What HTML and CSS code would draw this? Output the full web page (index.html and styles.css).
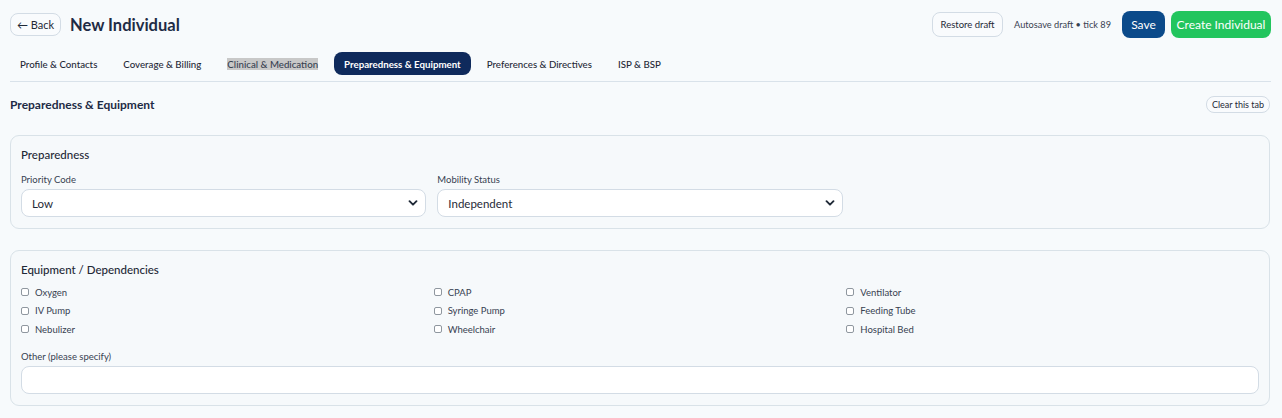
FILE: index.html
```html
<!DOCTYPE html>
<html lang="en">
<head>
<meta charset="utf-8">
<title>New Individual</title>
<link rel="stylesheet" href="styles.css">
</head>
<body>
<div class="page">
  <header class="topbar">
    <div class="left">
      <button class="btn btn-ghost back">← Back</button>
      <h1 class="title">New Individual</h1>
    </div>
    <div class="right">
      <button class="btn btn-ghost restore">Restore draft</button>
      <span class="autosave">Autosave draft • tick 89</span>
      <button class="btn btn-save">Save</button>
      <button class="btn btn-create">Create Individual</button>
    </div>
  </header>

  <nav class="tabs">
    <span class="tab">Profile &amp; Contacts</span>
    <span class="tab">Coverage &amp; Billing</span>
    <span class="tab"><span class="sel">Clinical &amp; Medication</span></span>
    <span class="tab active">Preparedness &amp; Equipment</span>
    <span class="tab">Preferences &amp; Directives</span>
    <span class="tab">ISP &amp; BSP</span>
  </nav>

  <div class="section-head">
    <h2 class="section-title">Preparedness &amp; Equipment</h2>
    <button class="btn btn-ghost clear">Clear this tab</button>
  </div>

  <section class="card card-prep">
    <h3 class="card-title">Preparedness</h3>
    <div class="grid3">
      <label class="field">
        <span class="label">Priority Code</span>
        <span class="select"><span>Low</span><svg class="chev" viewBox="0 0 10 10" width="10" height="10"><path d="M1.5 3.2 L5 6.7 L8.5 3.2" fill="none" stroke="#1f2937" stroke-width="1.9" stroke-linecap="round" stroke-linejoin="round"/></svg></span>
      </label>
      <label class="field">
        <span class="label">Mobility Status</span>
        <span class="select"><span>Independent</span><svg class="chev" viewBox="0 0 10 10" width="10" height="10"><path d="M1.5 3.2 L5 6.7 L8.5 3.2" fill="none" stroke="#1f2937" stroke-width="1.9" stroke-linecap="round" stroke-linejoin="round"/></svg></span>
      </label>
    </div>
  </section>

  <section class="card card-equip">
    <h3 class="card-title">Equipment / Dependencies</h3>
    <div class="checks">
      <label class="check"><span class="box"></span>Oxygen</label>
      <label class="check"><span class="box"></span>CPAP</label>
      <label class="check"><span class="box"></span>Ventilator</label>
      <label class="check"><span class="box"></span>IV Pump</label>
      <label class="check"><span class="box"></span>Syringe Pump</label>
      <label class="check"><span class="box"></span>Feeding Tube</label>
      <label class="check"><span class="box"></span>Nebulizer</label>
      <label class="check"><span class="box"></span>Wheelchair</label>
      <label class="check"><span class="box"></span>Hospital Bed</label>
    </div>
    <label class="field other">
      <span class="label">Other (please specify)</span>
      <span class="input"></span>
    </label>
  </section>
</div>
</body>
</html>
```

FILE: styles.css
```css
* { box-sizing: border-box; }
html, body { margin: 0; padding: 0; }
body {
  background: #f7fafc;
  font-family: Lato, "Noto Sans", sans-serif;
  color: #1e293b;
}
.page { padding: 11px 11px 0 10px; }

.btn {
  font-family: inherit;
  border: 1px solid #d3dce5;
  border-radius: 8px;
  cursor: pointer;
  line-height: 1;
  padding: 0;
}
.btn-ghost { background: #f9fbfd; color: #1f2937; }

.topbar { display: flex; justify-content: space-between; align-items: center; height: 27px; }
.left { display: flex; align-items: center; }
.back { width: 51px; height: 23px; font-size: 11px; }
.title { margin: 0 0 0 9px; font-size: 16.5px; font-weight: 700; color: #1e2b45; }

.right { display: flex; align-items: center; }
.restore { width: 71px; height: 25px; font-size: 9.5px; }
.autosave { font-size: 9.2px; color: #374151; margin: 0 11px 0 11px; }
.btn-save { width: 43px; height: 27px; background: #0b4a8a; color: #fff; border: none; font-size: 12px; }
.btn-create { width: 100px; height: 27px; margin-left: 6px; background: #22c55e; color: #fff; border: none; font-size: 12px; }

.tabs {
  display: flex;
  gap: 6px;
  margin-top: 14px;
  padding-bottom: 6px;
  border-bottom: 1px solid #d9e2ea;
}
.tab {
  font-size: 9.7px;
  font-weight: 500;
  color: #1f2937;
  height: 23px;
  padding: 0 10px;
  display: flex;
  align-items: center;
  border-radius: 8px;
  white-space: nowrap;
}
.tab .sel { background: #c8c8c8; color: #374151; }
.tab.active { background: #0f2a5c; color: #fff; font-weight: 700; }

.section-head {
  display: flex;
  justify-content: space-between;
  align-items: center;
  margin-top: 14px;
  height: 17px;
}
.section-title { margin: 0; font-size: 12px; font-weight: 700; color: #1e2b45; }
.clear { width: 64px; height: 17px; font-size: 9px; margin-right: 1px; }

.card {
  border: 1px solid #d9e2e8;
  border-radius: 9px;
  background: #f6f9fb;
  padding: 11px 10px 11px 10px;
  margin-right: 1px;
}
.card-prep { margin-top: 22px; }
.card-equip { margin-top: 21px; }
.card-title { margin: 0; font-size: 11.5px; font-weight: 500; color: #1f2937; line-height: 16px; }

.grid3 { display: grid; grid-template-columns: repeat(3, 1fr); column-gap: 11px; margin-top: 11px; }
.field { display: flex; flex-direction: column; }
.label { font-size: 9.5px; color: #374151; line-height: 12px; margin-bottom: 3px; }
.select {
  height: 28px;
  background: #fff;
  border: 1px solid #d3dce5;
  border-radius: 8px;
  display: flex;
  align-items: center;
  justify-content: space-between;
  padding: 0 7px 0 10px;
  font-size: 11.5px;
  color: #1f2937;
}
.chev { display: block; }

.checks { display: grid; grid-template-columns: repeat(3, 1fr); row-gap: 4px; margin-top: 7px; }
.check { display: flex; align-items: center; font-size: 9.5px; color: #374151; height: 14.5px; }
.box {
  width: 8px; height: 8px;
  border: 1px solid #8f979f;
  border-radius: 2px;
  background: #fff;
  margin-right: 6px;
}
.other { margin-top: 14px; }
.other .label { margin-bottom: 3px; }
.input {
  height: 28px;
  background: #fff;
  border: 1px solid #d3dce5;
  border-radius: 8px;
}
```
